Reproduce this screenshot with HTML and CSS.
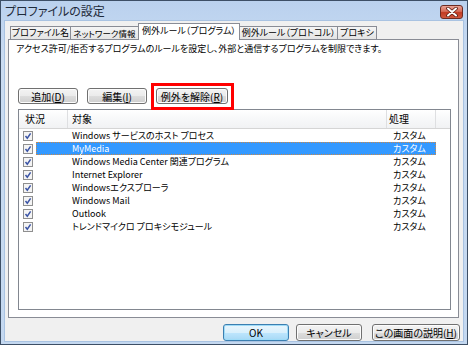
FILE: index.html
```html
<!DOCTYPE html>
<html lang="ja">
<head>
<meta charset="UTF-8">
<link rel="stylesheet" href="styles.css">
<title>プロファイルの設定</title>
</head>
<body>
<div class="window">
  <div class="titlebar">
    <span class="title">プロファイルの設定</span>
    <span class="close">
      <svg width="12" height="10" viewBox="0 0 12 10"><path d="M2 1.5 L10 8.5 M10 1.5 L2 8.5" stroke="#5a1a10" stroke-width="3.6" stroke-linecap="round"/><path d="M2 1.5 L10 8.5 M10 1.5 L2 8.5" stroke="#fff" stroke-width="2" stroke-linecap="round"/></svg>
    </span>
  </div>

  <div class="client">
    <div class="tabs">
      <div class="tab t-name">プロファイル名</div>
      <div class="tab t-net">ネットワーク情報</div>
      <div class="tab t-prog active">例外ルール（プログラム）</div>
      <div class="tab t-proto">例外ルール（プロトコル）</div>
      <div class="tab t-proxy">プロキシ</div>
    </div>

    <div class="panel">
      <p class="desc">アクセス許可/拒否するプログラムのルールを設定し、外部と通信するプログラムを制限できます。</p>

      <div class="actions">
        <button class="btn">追加(<u>D</u>)</button>
        <button class="btn">編集(<u>I</u>)</button>
        <!-- red box marks the button in the manual -->
        <button class="btn wide marked">例外を解除(<u>R</u>)</button>
      </div>

      <div class="list">
        <div class="list-head">
          <div class="col-state">状況</div>
          <div class="col-name">対象</div>
          <div class="col-act">処理</div>
          <div class="col-fill"></div>
        </div>

        <div class="row">
          <div class="chk"><svg width="10" height="10"><rect x="0.5" y="0.5" width="9" height="9" fill="#f4f4f4" stroke="#8f8f8f"/><path d="M2.5 5 L4.3 7.2 L7.6 2.4" fill="none" stroke="#3b54a5" stroke-width="1.5"/></svg></div>
          <div class="item"><span class="name">Windows サービスのホスト プロセス</span><span class="act">カスタム</span></div>
        </div>
        <div class="row selected">
          <div class="chk"><svg width="10" height="10"><rect x="0.5" y="0.5" width="9" height="9" fill="#f4f4f4" stroke="#8f8f8f"/><path d="M2.5 5 L4.3 7.2 L7.6 2.4" fill="none" stroke="#3b54a5" stroke-width="1.5"/></svg></div>
          <div class="item"><span class="name">MyMedia</span><span class="act">カスタム</span></div>
        </div>
        <div class="row">
          <div class="chk"><svg width="10" height="10"><rect x="0.5" y="0.5" width="9" height="9" fill="#f4f4f4" stroke="#8f8f8f"/><path d="M2.5 5 L4.3 7.2 L7.6 2.4" fill="none" stroke="#3b54a5" stroke-width="1.5"/></svg></div>
          <div class="item"><span class="name">Windows Media Center 関連プログラム</span><span class="act">カスタム</span></div>
        </div>
        <div class="row">
          <div class="chk"><svg width="10" height="10"><rect x="0.5" y="0.5" width="9" height="9" fill="#f4f4f4" stroke="#8f8f8f"/><path d="M2.5 5 L4.3 7.2 L7.6 2.4" fill="none" stroke="#3b54a5" stroke-width="1.5"/></svg></div>
          <div class="item"><span class="name">Internet Explorer</span><span class="act">カスタム</span></div>
        </div>
        <div class="row">
          <div class="chk"><svg width="10" height="10"><rect x="0.5" y="0.5" width="9" height="9" fill="#f4f4f4" stroke="#8f8f8f"/><path d="M2.5 5 L4.3 7.2 L7.6 2.4" fill="none" stroke="#3b54a5" stroke-width="1.5"/></svg></div>
          <div class="item"><span class="name">Windowsエクスプローラ</span><span class="act">カスタム</span></div>
        </div>
        <div class="row">
          <div class="chk"><svg width="10" height="10"><rect x="0.5" y="0.5" width="9" height="9" fill="#f4f4f4" stroke="#8f8f8f"/><path d="M2.5 5 L4.3 7.2 L7.6 2.4" fill="none" stroke="#3b54a5" stroke-width="1.5"/></svg></div>
          <div class="item"><span class="name">Windows Mail</span><span class="act">カスタム</span></div>
        </div>
        <div class="row">
          <div class="chk"><svg width="10" height="10"><rect x="0.5" y="0.5" width="9" height="9" fill="#f4f4f4" stroke="#8f8f8f"/><path d="M2.5 5 L4.3 7.2 L7.6 2.4" fill="none" stroke="#3b54a5" stroke-width="1.5"/></svg></div>
          <div class="item"><span class="name">Outlook</span><span class="act">カスタム</span></div>
        </div>
        <div class="row">
          <div class="chk"><svg width="10" height="10"><rect x="0.5" y="0.5" width="9" height="9" fill="#f4f4f4" stroke="#8f8f8f"/><path d="M2.5 5 L4.3 7.2 L7.6 2.4" fill="none" stroke="#3b54a5" stroke-width="1.5"/></svg></div>
          <div class="item"><span class="name">トレンドマイクロ プロキシモジュール</span><span class="act">カスタム</span></div>
        </div>
      </div>
    </div>

    <div class="footer">
      <button class="btn default ok">OK</button>
      <button class="btn cancel">キャンセル</button>
      <button class="btn help">この画面の説明(<u>H</u>)</button>
    </div>
  </div>
</div>
</body>
</html>
```

FILE: styles.css
```css
* {
  box-sizing: border-box;
}

body {
  margin: 0;
  font-family: "Noto Sans CJK JP", "Liberation Sans", sans-serif;
  font-size: 10px;
  font-feature-settings: "palt";
  color: #000;
}

.window {
  width: 468px;
  height: 345px;
  border: 1px solid #3d4f66;
  background: linear-gradient(#bad1ee, #cadcf2 60px, #c4d8f0);
  padding: 0 3px 2px 3px;
  display: flex;
  flex-direction: column;
}

.titlebar {
  height: 19px;
  display: flex;
  align-items: center;
  justify-content: space-between;
  padding: 0 1px 0 1px;
}

.title {
  font-size: 12px;
  color: #1e2a3a;
}

.close {
  width: 23px;
  height: 14px;
  margin-top: 2px;
  border: 1px solid #6d2b22;
  border-radius: 3px;
  background: linear-gradient(#e9a395, #d66b58 45%, #c23a22 55%, #d0583f);
  display: flex;
  align-items: center;
  justify-content: center;
}

.client {
  flex: 1;
  background: #f0f0f0;
  border: 1px solid #a9c3e2;
  padding: 2px 4px 0 3px;
  display: flex;
  flex-direction: column;
}

/* tab strip */
.tabs {
  display: flex;
  align-items: flex-end;
  height: 16px;
  padding-left: 2px;
  position: relative;
  z-index: 1;
}

.tab {
  height: 13px;
  line-height: 12px;
  font-size: 9px;
  border: 1px solid #898c95;
  border-bottom: none;
  background: linear-gradient(#f5f5f5, #e4e4e4);
  margin-right: -1px;
  white-space: nowrap;
  text-align: center;
}

.t-name { width: 61px; }
.t-net { width: 69px; font-size: 8.5px; }
.t-prog { width: 102px; }
.t-proto { width: 99px; }
.t-proxy { width: 40px; }

.tab.active {
  height: 17px;
  line-height: 14px;
  margin-bottom: -1px;
  background: #fff;
}

.panel {
  height: 279px;
  border: 1px solid #898c95;
  background: #fff;
  padding: 0 7px;
}

.desc {
  margin: 3px 0 0;
  line-height: 12px;
  font-size: 9px;
  white-space: nowrap;
}

.actions {
  display: flex;
  gap: 9px;
  margin: 33px 0 0 2px;
}

.btn {
  font: inherit;
  color: #000;
  width: 60px;
  height: 16px;
  padding: 0;
  line-height: 13px;
  border: 1px solid #707070;
  border-radius: 3px;
  background: linear-gradient(#f3f3f3, #ebebeb 50%, #dddddd 51%, #cfcfcf);
  box-shadow: inset 0 0 0 1px #fcfcfc;
}

.btn u {
  text-underline-offset: 1px;
}

.btn.wide {
  width: 72px;
}

/* red annotation frame drawn over the button */
.btn.marked {
  position: relative;
}

.btn.marked::after {
  content: "";
  position: absolute;
  left: -6px;
  top: -6px;
  right: -7px;
  bottom: -7px;
  border: 3px solid #ff0000;
}

/* program list */
.list {
  margin: 5px 0 0 2px;
  height: 201px;
  border: 1px solid #828790;
  background: #fff;
}

.list-head {
  display: flex;
  height: 19px;
  line-height: 18px;
  border-bottom: 1px solid #d5d5d5;
  background: linear-gradient(#ffffff, #f7f8f9 50%, #f1f2f4);
}

.list-head > div {
  border-right: 1px solid #dedfe1;
}

.col-state {
  width: 49px;
  padding-left: 6px;
}

.col-name {
  width: 319px;
  padding-left: 4px;
}

.col-act {
  width: 49px;
  padding-left: 2px;
}

.col-fill {
  flex: 1;
  border-right: none !important;
}

.row {
  display: flex;
  height: 13px;
  line-height: 13px;
  font-size: 9px;
}

.chk {
  width: 17px;
  padding-left: 4px;
  display: flex;
  align-items: center;
}

.chk svg {
  display: block;
}

.item {
  width: 400px;
  display: flex;
  white-space: nowrap;
}

.name {
  width: 351px;
  padding-left: 36px;
}

.act {
  padding-left: 6px;
}

.row.selected .item {
  background: #3399ff;
  color: #fff;
  outline: 1px dotted #c9894a;
  outline-offset: -1px;
}

.footer {
  display: flex;
  justify-content: flex-end;
  padding-top: 6px;
  margin-right: -1px;
}

.footer .btn {
  height: 17px;
  width: 66px;
}

.footer .cancel {
  margin-left: 7px;
}

.footer .help {
  width: 88px;
  margin-left: 10px;
}

.btn.default {
  border-color: #3c7fb1;
  background: linear-gradient(#eaf6fd, #d9f0fc 50%, #bee6fd 51%, #a7d9f5);
  box-shadow: inset 0 0 0 1px #9fdcf8;
}
```
